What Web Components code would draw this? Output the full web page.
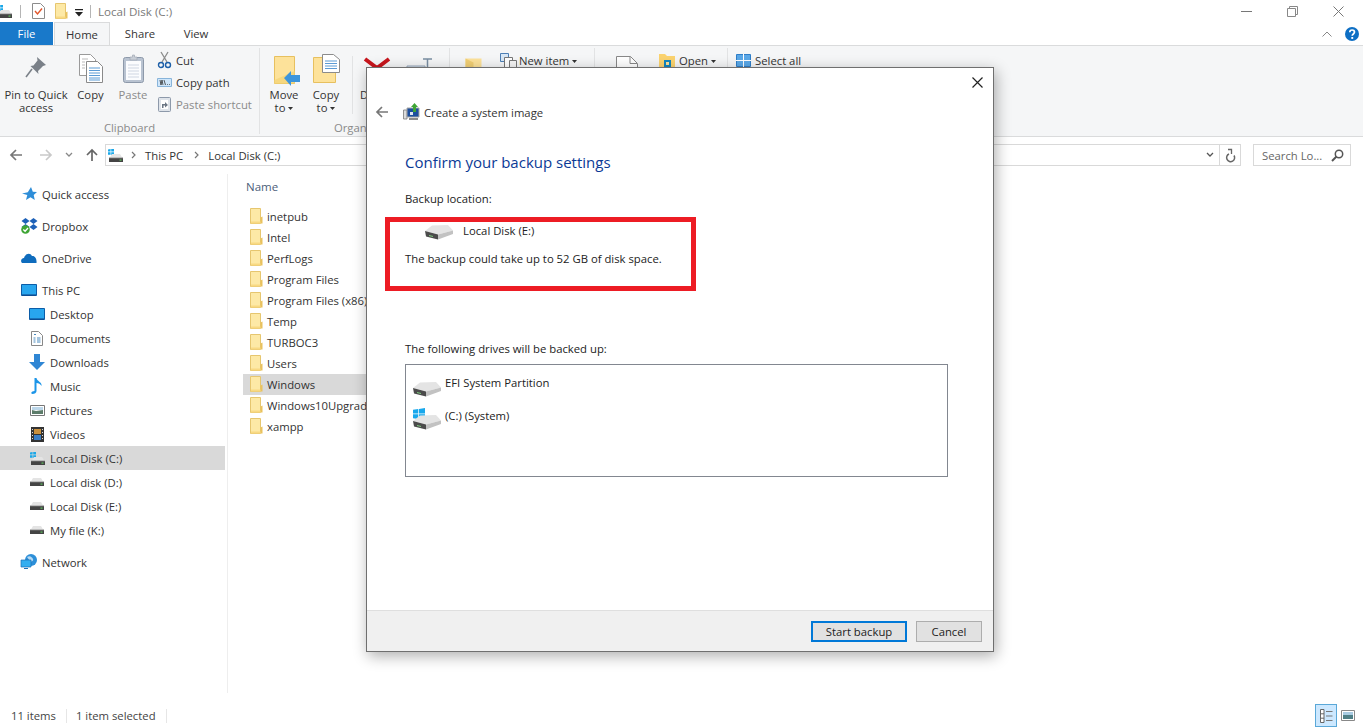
<!DOCTYPE html>
<html><head><meta charset="utf-8">
<style>
html,body{margin:0;padding:0;width:1363px;height:727px;overflow:hidden;background:#fff;font:11.3px "Open Sans","Liberation Sans",sans-serif;color:#222}
</style></head><body>
<win-explorer>
  <ex-title></ex-title>
  <ex-tabs></ex-tabs>
  <ex-ribbon></ex-ribbon>
  <ex-address></ex-address>
  <ex-main></ex-main>
  <ex-status></ex-status>
</win-explorer>
<backup-dialog></backup-dialog>
<script>
const FOLDER=`<path d="M1.500 .5h10v15h-10z" fill="#fde9a6" stroke="#e6c66f"/><path d="M11.500 9.500l2-1v7h-2z" fill="#e9c25e"/><path d="M2 13.500h9.500v2H2z" fill="#f8d983"/>`;
const DISK=`<path d="M1.500 2.500 3 0h8l1.500 2.500V4h-11z" fill="#e4e4e4"/><path d="M0 3h14v5H0z" fill="#444"/><path d="M0 3h14v1.200H0z" fill="#bdbdbd"/><path d="M10.500 5.500h2v1.200h-2z" fill="#5ec25e"/>`;
const WINL=`<path d="M0 .4 2.600 0v2.600H0zM3.200 0 6 0v2.600H3.200zM0 3.200h2.600V5.800H0zM3.200 3.200H6V6H3.200z" fill="#1aa7e8"/>`;
const BIG=`<path d="M1 7 8 1.500 24 1l5 5.500-15 4z" fill="#e4e4e4"/><path d="M1 7l13 3.500V15.500L2 12.500z" fill="#4b4b4b"/><path d="M14 10.500l15-4v3.500l-15 5.500z" fill="#c2c2c2"/><path d="M5 11l4 1v1l-4-1z" fill="#7ecb7e"/>`;
const ICONS={
 folder:[14,17,FOLDER],
 disk:[14,8,DISK],
 windisk:[15,13,WINL+`<g transform="translate(1 5)">${DISK}</g>`],
 bigdisk:[30,16,BIG],
 win:[12,12,`<path d="M0 1.700 5.300 1v4.600H0zM6 .9 12 0v5.600H6zM0 6.300h5.300V11L0 10.300zM6 6.300h6V12L6 11.100z" fill="#19a8ec"/>`],
 sysimg:[17,18,`<path d="M0.500 7h3.500v9H.5z" fill="#dcdcdc" stroke="#7a7a7a" stroke-width=".8"/><path d="M4 5h12v9H4z" fill="#1d4f9e" stroke="#a5a5a5"/><path d="M6 15h9v2H6z" fill="#8b8b8b"/><path d="M11.500 0l3.500 4h-2v5h-3V4h-2z" fill="#3fa535"/><path d="M7 9h3v3H7z" fill="#dfe6f2"/>`],
 back:[14,14,`<path d="M13 7H2.500M7 2 2 7l5 5" fill="none" stroke="currentColor" stroke-width="1.700"/>`],
 fwd:[14,14,`<path d="M1 7h10.500M7 2l5 5-5 5" fill="none" stroke="currentColor" stroke-width="1.700"/>`],
 up:[14,14,`<path d="M7 13V2M2 7l5-5 5 5" fill="none" stroke="currentColor" stroke-width="1.700"/>`],
 chev:[8,6,`<path d="M1 1l3 3 3-3" fill="none" stroke="currentColor" stroke-width="1.300"/>`],
 crumb:[6,8,`<path d="M1 1l3 3-3 3" fill="none" stroke="currentColor" stroke-width="1.200"/>`],
 drop:[5,3,`<path d="M0 0h5L2.500 3z" fill="currentColor"/>`],
 qat:[8,8,`<path d="M0 0h8v1.300H0zM0 3h8L4 7.500z" fill="#222"/>`],
 check:[13,16,`<path d="M.5.500h8l4 4v11H.5z" fill="#fff" stroke="#8c8c8c"/><path d="M3 8l2.500 3L10 5.500" fill="none" stroke="#e2562b" stroke-width="1.400"/>`],
 min:[11,1,`<path d="M0 0h11v1H0z" fill="#777"/>`],
 restore:[11,11,`<path d="M.5 2.500h8v8h-8zM2.500 2.500v-2h8v8h-2" fill="none" stroke="#888"/>`],
 close:[11,11,`<path d="M.5.500l10 10M10.500.500l-10 10" stroke="#777" fill="none"/>`],
 dclose:[11,11,`<path d="M.5.500l10 10M10.500.500l-10 10" stroke="#222" stroke-width="1.200" fill="none"/>`],
 caret:[10,6,`<path d="M.5 5.500 5 1l4.500 4.500" fill="none" stroke="#888"/>`],
 help:[14,14,`<circle cx="7" cy="7" r="7" fill="#0e6fc4"/><path d="M4.800 5.300c0-3 4.700-3 4.700-.2 0 1.900-2.300 1.900-2.300 3.700" fill="none" stroke="#fff" stroke-width="1.700"/><path d="M6.300 10h1.900v1.900H6.300z" fill="#fff"/>`],
 refresh:[11,13,`<path d="M9 5.500A4 4 0 1 1 4 4" fill="none" stroke="#666" stroke-width="1.500" transform="translate(0 1)"/><path d="M3 .500h3.500V5" fill="none" stroke="#666" stroke-width="1.300"/>`],
 search:[13,13,`<circle cx="8" cy="5" r="3.700" fill="none" stroke="#555" stroke-width="1.500"/><path d="M5.500 7.500 1 12" stroke="#555" stroke-width="2"/>`],
 pin:[22,22,`<path d="M12 1l9 8-3 1-5 5 .5 3-8-8 3-.5 4-5z" fill="#7a8088"/><path d="M7 13l-6 8" stroke="#7a8088" stroke-width="1.600"/>`],
 copy:[24,29,`<path d="M.5.500h11l5 5v16H.5z" fill="#fff" stroke="#9a9a9a"/><path d="M7.500 7.500h11l5 5v16h-16z" fill="#fff" stroke="#8a8a8a"/><path d="M10 14h11M10 16.500h11M10 19h11M10 21.500h11M10 24h11M10 26h11" stroke="#5b9bd5"/><path d="M3 5h6M3 8h3M3 11h3M3 14h3" stroke="#bbb"/>`],
 paste:[21,29,`<rect x=".5" y="3.500" width="20" height="25" rx="2" fill="#b9c3d1" stroke="#8d99aa"/><path d="M3 7h15v19H3z" fill="#fbfcfe"/><path d="M5 11h11M5 14h11M5 17h11M5 20h11M5 23h11" stroke="#cfd6e2"/><path d="M7 3h2.500V1h2v2H14v3H7z" fill="#c8ced6" stroke="#9aa3ae" stroke-width=".6"/>`],
 cut:[13,17,`<path d="M4 10 10 0M9 10 3 0" stroke="#8c8c8c" stroke-width="1.300"/><circle cx="3" cy="13" r="2.500" fill="none" stroke="#1d5fa8" stroke-width="1.400"/><circle cx="10" cy="13" r="2.500" fill="none" stroke="#1d5fa8" stroke-width="1.400"/>`],
 cpath:[15,9,`<path d="M.5.500h14v8H.5z" fill="#cfe6fa" stroke="#88b4da"/><path d="M3 2l1 5 1-5 1 5M7 2l1.500 5M10 6.500h.8M12 6.500h.8" stroke="#333" stroke-width=".8" fill="none"/>`],
 pshort:[13,16,`<rect x=".5" y="1.500" width="12" height="14" rx="1" fill="#dfe4ea" stroke="#8d99aa"/><path d="M3 4h7v9H3z" fill="#fff"/><path d="M4 12V8h3V6l3 3-3 2.500V9.500H5.500V12z" fill="#6c7785"/>`],
 moveto:[26,28,`<path d="M.5.500h20v27H.5z" fill="#fde29a" stroke="#e7c05f"/><path d="M20.500 15V27.500H.5V24z" fill="#f6d77f"/><path d="M10 22l7-7v4h9v7h-9v4z" fill="#3d95dc"/>`],
 copyto:[27,29,`<path d="M.5 3.500h22v25H.5z" fill="#fde29a" stroke="#e7c05f"/><path d="M9.500.500h11l6 5v13h-17z" fill="#fff" stroke="#8b8b8b"/><path d="M12 7h12M12 9.500h12M12 12h12M12 14.500h12" stroke="#5b9bd5"/>`],
 del:[26,17,`<path d="M1 1l12 9 12-9M8 16l5-6 5 6" fill="none" stroke="#c8161d" stroke-width="4"/>`],
 rename:[30,20,`<path d="M1 8h18v12H1z" fill="#dce5ee" stroke="#94a6ba"/><path d="M17 1h9M21.500 1v18M17 19h9" stroke="#7a8ea3" stroke-width="1.500" fill="none"/>`],
 newfolder:[17,22,`<path d="M.5.500h16v21H.5z" fill="#fde29a"/><path d="M.5.500l8 4v17h-8z" fill="#f2cf74"/>`],
 newitem:[17,15,`<path d="M.5.500h8v8h-8z" fill="#d8e8f7" stroke="#4d7fb5"/><path d="M4.500 4.500h8v10h-8z" fill="#fff" stroke="#777"/><path d="M9.500 7.500h7v7h-7z" fill="#f5f5f5" stroke="#777"/>`],
 prop:[22,22,`<path d="M.5.500h14l7 7v14H.5z" fill="#fff" stroke="#888"/><path d="M14 .5v7h7" fill="none" stroke="#888"/><path d="M13 16h4v4h-4z" fill="#d9662b"/>`],
 open:[16,15,`<path d="M0 1h6l2 2h8v12H0z" fill="#fbd36f"/><path d="M5 7h7v8H5z" fill="#1286bf"/><path d="M7 9h3v3H7z" fill="#fde29a"/>`],
 sel:[15,13,`<path d="M.5.500h14v12H.5z" fill="#5aa8e8" stroke="#2f7ec8"/><path d="M7.500 0v13M0 6.500h15" stroke="#fff"/>`],
 star:[15,15,`<path d="M9 0l1.800 4.700 4.200.3-3.300 3 1.100 5-4.300-2.800L4 13l1.300-5L0 6.500l5.800-1.200z" fill="#2f8ed8"/>`],
 dropbox:[17,16,`<path d="M4.500 0 8.500 3 4.500 6 .5 3zM12.500 0l4 3-4 3-4-3zM4.500 6l4 3-4 3-4-3zM12.500 6l4 3-4 3-4-3z" fill="#1d61b8"/><circle cx="4.500" cy="11.500" r="4.300" fill="#3fa535"/><path d="M2.300 11.500l1.800 1.800L7 10" stroke="#fff" stroke-width="1.300" fill="none"/>`],
 cloud:[16,10,`<path d="M1 10c-2-2-.5-5 2-5C4 1 9-1 11 3c3-.5 5 3 4.500 7z" fill="#0f6cbd"/>`],
 pc:[16,12,`<path d="M.5.500h15v11H.5z" fill="#28a6ee" stroke="#0c5da8"/><path d="M1 10.500h14v1H1z" fill="#0c3f80"/>`],
 doc:[12,15,`<path d="M.5.500h7l4 4v10H.5z" fill="#fff" stroke="#888"/><path d="M2.500 7h2M2.500 9h2M2.500 11h2M6 7h3.500M6 9h3.500M6 11h3.500M3 3.500h2" stroke="#4a8bbf"/>`],
 dl:[16,16,`<path d="M5 0h6v8h5l-8 8-8-8h5z" fill="#2f86d4"/>`],
 music:[12,16,`<path d="M3.500 0h2c0 3 6 4 5 8-1-2-3-3-5-3v8c0 2-2 3-4 3-2 0-1.500-3 2-3z" fill="#1c95e8"/>`],
 pic:[15,11,`<path d="M.5.500h14v10H.5z" fill="#fff" stroke="#777"/><path d="M2 2h11v3H2z" fill="#bcd7ea"/><path d="M2 5l4 1 7-1v4H2z" fill="#5c7c6a"/>`],
 video:[13,15,`<path d="M0 0h13v15H0z" fill="#333"/><path d="M3 2h7v5H3z" fill="#c98f3b"/><path d="M3 8h7v5H3z" fill="#3a7dc4"/><path d="M1 2h1v1H1zM1 5h1v1H1zM1 8h1v1H1zM1 11h1v1H1zM11 2h1v1h-1zM11 5h1v1h-1zM11 8h1v1h-1zM11 11h1v1h-1z" fill="#ddd"/>`],
 net:[16,16,`<circle cx="10" cy="6" r="6" fill="#2d8fd8"/><path d="M6 3c3-2 5 0 6 2s-2 3-3 2z" fill="#b5d9f3"/><path d="M0 6h10v7H0z" fill="#33aef0" stroke="#1a6fb5" stroke-width=".7"/><path d="M3 14h4v1H3z" fill="#1a6fb5"/>`],
 details:[14,14,`<path d="M1.500 .5h3.500v13H1.500z" fill="#fff" stroke="#666"/><path d="M1.500 4.800h3.500M1.500 9.200h3.500" stroke="#666"/><path d="M7 2.500h6.500M7 7h6.500M7 11.500h6.500" stroke="#777" stroke-width="1.200"/>`],
 thumbs:[14,11,`<path d="M.5.500h13v10H.5z" fill="#fff" stroke="#888"/><path d="M2 2h10v3H2z" fill="#a8cbe2"/><path d="M2 5h10v4H2z" fill="#4f7f86"/>`]
};
class XIcon extends HTMLElement{
  connectedCallback(){
    if(this.shadowRoot)return;
    const [w,h,p]=ICONS[this.getAttribute('name')];
    this.attachShadow({mode:'open'}).innerHTML=`<style>:host{display:inline-flex;flex:none;width:${w}px;height:${h}px}svg{display:block;overflow:visible}</style><svg width="${w}" height="${h}" viewBox="0 0 ${w} ${h}">${p}</svg>`;
  }
}
customElements.define('x-icon',XIcon);
function def(tag,html){
  customElements.define(tag,class extends HTMLElement{
    connectedCallback(){
      if(this.shadowRoot)return;
      const s=this.attachShadow({mode:'open'});
      s.innerHTML=html;
    }
  });
}
def('win-explorer',`<style>:host{display:flex;flex-direction:column;width:1363px;height:727px;overflow:hidden}</style><slot></slot>`);
def('ex-title',`<style>
:host{display:flex;align-items:center;height:22px;flex:none;color:#7a7a7a;font-size:11.6px}
.l{display:flex;align-items:center;margin-left:-3px}
.sep{width:1px;height:13px;background:#b5b5b5}
.title{margin-left:7px}
.w{margin-left:auto;display:flex;align-items:center;padding-right:19px;gap:35px}
</style><div class="l"><x-icon name="windisk"></x-icon><span class="sep" style="margin-left:8px"></span><x-icon name="check" style="margin-left:11px"></x-icon><x-icon name="folder" style="margin-left:9px"></x-icon><x-icon name="qat" style="margin-left:7px;margin-top:3px"></x-icon><span class="sep" style="margin-left:7px"></span></div><span class="title">Local Disk (C:)</span>
<div class="w"><x-icon name="min"></x-icon><x-icon name="restore"></x-icon><x-icon name="close"></x-icon></div>`);
def('ex-tabs',`<style>
:host{display:flex;height:23px;flex:none;align-items:stretch;color:#333}
.t{display:flex;align-items:center;justify-content:center}
.f{width:53px;background:#1979ca;color:#fff}
.h{width:56px;background:#f5f6f7;border:1px solid #dadbdc;border-bottom:0;margin-left:1px;box-sizing:border-box}
.s{width:60px}.v{width:52px}
.r{margin-left:auto;display:flex;align-items:center;gap:13px;padding-right:4px}
</style><div class="t f">File</div><div class="t h">Home</div><div class="t s">Share</div><div class="t v">View</div>
<div class="r"><x-icon name="caret"></x-icon><x-icon name="help"></x-icon></div>`);
def('ex-ribbon',`<style>
:host{display:flex;height:92px;flex:none;box-sizing:border-box;background:#f5f6f7;border-top:1px solid #dadbdc;border-bottom:1px solid #dadbdc;color:#333;line-height:13px}
.g{display:flex;flex-direction:column;border-right:1px solid #e2e3e4;margin:2px 0 2px;box-sizing:border-box;flex:none}
.c{display:flex;height:73px;flex:none}
.lab{height:14px;text-align:center;color:#8a8a8a;line-height:14px}
.b{display:flex;flex-direction:column;align-items:center;text-align:center;flex:none}
.ic{height:40px;display:flex;align-items:flex-start;justify-content:center;padding-top:6px;box-sizing:border-box}
.dis{color:#8b8b8b}
.col{display:flex;flex-direction:column;padding-top:1px}
.row{display:flex;align-items:center;gap:4px;height:22px;white-space:nowrap}
.sm{width:15px;display:flex;justify-content:center;flex:none}
.v{width:1px;background:#e2e3e4;margin:8px 0 7px 8px}
</style>
<div class="g" style="width:260px"><div class="c">
 <div class="b" style="width:72px"><div class="ic" style="padding-top:8px"><x-icon name="pin"></x-icon></div><span>Pin to Quick<br>access</span></div>
 <div class="b" style="width:37px"><div class="ic"><x-icon name="copy"></x-icon></div><span>Copy</span></div>
 <div class="b dis" style="width:48px"><div class="ic"><x-icon name="paste"></x-icon></div><span>Paste</span></div>
 <div class="col"><div class="row"><span class="sm"><x-icon name="cut"></x-icon></span>Cut</div><div class="row"><span class="sm"><x-icon name="cpath"></x-icon></span>Copy path</div><div class="row dis"><span class="sm"><x-icon name="pshort"></x-icon></span>Paste shortcut</div></div>
 </div><div class="lab">Clipboard</div></div>
<div class="g" style="width:190px"><div class="c">
 <div class="b" style="width:48px"><div class="ic" style="padding-top:8px"><x-icon name="moveto" style="margin-left:6px"></x-icon></div><span>Move<br>to <x-icon name="drop" style="vertical-align:2px"></x-icon></span></div>
 <div class="b" style="width:36px"><div class="ic"><x-icon name="copyto"></x-icon></div><span>Copy<br>to <x-icon name="drop" style="vertical-align:2px"></x-icon></span></div>
 <div class="v"></div>
 <div class="b" style="width:48px"><div class="ic" style="padding-top:10px"><x-icon name="del"></x-icon></div><span>Delete</span></div>
 <div class="b" style="width:40px"><div class="ic" style="padding-top:10px"><x-icon name="rename"></x-icon></div><span>Rename</span></div>
 </div><div class="lab" style="padding-left:6px">Organize</div></div>
<div class="g" style="width:145px"><div class="c">
 <div class="b" style="width:46px"><div class="ic" style="padding-top:10px"><x-icon name="newfolder"></x-icon></div></div>
 <div class="col" style="margin-left:4px"><div class="row" style="gap:2px"><x-icon name="newitem"></x-icon><span>New item <x-icon name="drop" style="vertical-align:2px"></x-icon></span></div></div>
 </div></div>
<div class="g" style="width:133px"><div class="c">
 <div class="b" style="width:64px"><div class="ic" style="padding-top:8px"><x-icon name="prop"></x-icon></div></div>
 <div class="col"><div class="row"><x-icon name="open"></x-icon><span>Open <x-icon name="drop" style="vertical-align:2px"></x-icon></span></div></div>
 </div></div>
<div class="g" style="border:0"><div class="c"><div class="col" style="padding-left:8px"><div class="row"><x-icon name="sel"></x-icon>Select all</div></div></div></div>`);
def('ex-address',`<style>
:host{display:flex;align-items:center;height:37px;flex:none;box-sizing:border-box;padding:0 12px 1px 9px;color:#333}
.n{display:flex;align-items:center;width:96px;flex:none}
.box{display:flex;align-items:center;height:22px;box-sizing:border-box;border:1px solid #d9d9d9}
.a{flex:none;width:1136px}
.i{margin-left:auto;display:flex;align-items:center}
.d{width:20px;height:20px;border-left:1px solid #d9d9d9;display:flex;align-items:center;justify-content:center}
.s{width:99px;margin-left:12px;padding-left:8px;color:#666;justify-content:space-between;padding-right:6px}
</style><div class="n"><x-icon name="back" style="color:#777"></x-icon><x-icon name="fwd" style="color:#c9c9c9;margin-left:16px"></x-icon><x-icon name="chev" style="color:#888;margin-left:12px"></x-icon><x-icon name="up" style="color:#666;margin-left:12px"></x-icon></div>
<div class="box a"><x-icon name="windisk" style="margin-left:2px"></x-icon><x-icon name="crumb" style="color:#777;margin-left:8px"></x-icon><span style="margin-left:8px">This PC</span><x-icon name="crumb" style="color:#777;margin-left:11px"></x-icon><span style="margin-left:8px">Local Disk (C:)</span><div class="i"><x-icon name="chev" style="color:#555;margin-right:5px"></x-icon><div class="d"><x-icon name="refresh"></x-icon></div></div></div>
<div class="box s"><span>Search Lo...</span><x-icon name="search"></x-icon></div>`);
def('ex-main',`<style>:host{display:flex;flex:1;min-height:0}</style><ex-nav></ex-nav><ex-files></ex-files>`);
const nav=(ic,t,cls='')=>`<div class="r ${cls}"><span class="i"><x-icon name="${ic}"></x-icon></span><span>${t}</span></div>`;
def('ex-nav',`<style>
:host{display:block;width:227px;flex:none;box-sizing:border-box;padding-top:8px;color:#333}
.r{display:flex;align-items:center;height:24px;width:225px;padding-left:20px;box-sizing:border-box}
.i{width:18px;display:flex;justify-content:center;flex:none;margin-right:4px}
.c .r{padding-left:28px}
.g{margin-bottom:8px}
.sel{background:#d9d9d9}
</style>
<div class="g">${nav('star','Quick access')}</div><div class="g">${nav('dropbox','Dropbox')}</div><div class="g">${nav('cloud','OneDrive')}</div>
<div class="g">${nav('pc','This PC')}<div class="c">${nav('pc','Desktop')}${nav('doc','Documents')}${nav('dl','Downloads')}${nav('music','Music')}${nav('pic','Pictures')}${nav('video','Videos')}${nav('windisk','Local Disk (C:)','sel')}${nav('disk','Local disk (D:)')}${nav('disk','Local Disk (E:)')}${nav('disk','My file (K:)')}</div></div>
<div class="g">${nav('net','Network')}</div>`);
const files=['inetpub','Intel','PerfLogs','Program Files','Program Files (x86)','Temp','TURBOC3','Users','Windows','Windows10Upgrade','xampp'];
def('ex-files',`<style>
:host{display:block;flex:1;border-left:1px solid #eeeeee;margin-bottom:11px;padding-left:15px;color:#333;white-space:nowrap;overflow:hidden}
.h{height:24px;line-height:24px;margin-left:3px;padding-top:1px;color:#4c607a;margin-bottom:7px;font-size:11.5px}
.r{display:flex;align-items:center;height:21px;padding-left:6px;width:400px;gap:4px}
.sel{background:#d9d9d9}
</style><div class="h">Name</div>${files.map(f=>`<div class="r ${f==='Windows'?'sel':''}"><x-icon name="folder"></x-icon><span>${f}</span></div>`).join('')}`);
def('ex-status',`<style>
:host{display:flex;align-items:center;height:23px;flex:none;color:#444}
.t{padding:0 10px 0 11px}
.s{width:1px;height:14px;background:#e6e6e6}
.v{margin-left:auto;display:flex;align-items:center;gap:4px;padding-right:8px}
.b{width:22px;height:23px;box-sizing:border-box;background:#cce8ff;border:1px solid #5aa8d8;display:flex;align-items:center;justify-content:center}
</style><span class="t">11 items</span><span class="s"></span><span class="t" style="padding-left:9px">1 item selected</span><span class="s"></span>
<div class="v"><div class="b"><x-icon name="details"></x-icon></div><x-icon name="thumbs"></x-icon></div>`);
def('backup-dialog',`<style>
:host{position:absolute;left:366px;top:67px;width:628px;height:585px;box-sizing:border-box;background:#fff;border:1px solid #6f6f6f;box-shadow:2px 4px 14px rgba(0,0,0,.32);display:flex;flex-direction:column;color:#222}
.top{display:flex;justify-content:flex-end;padding:9px 10px 0 0;height:25px;box-sizing:border-box;flex:none}
.head{display:flex;align-items:center;height:38px;flex:none;padding-left:8px;color:#333}
.head .t{margin-left:4px}
.body{flex:1;padding:0 0 0 38px}
h1{font:400 15px/18px "Open Sans","Liberation Sans",sans-serif;color:#0b3a96;margin:22px 0 0}
p{margin:0;line-height:15px}
.loc{margin-top:20px}
.d{display:flex;margin-top:18px;padding-left:19px;height:19px}
.d span{margin-left:9px;margin-top:-1px;line-height:15px}
.l2{margin-top:8px}
.f{margin-top:75px}
.list{width:543px;height:113px;box-sizing:border-box;border:1px solid #828790;margin-top:8px;padding-top:12px}
.li{display:flex;height:33px;padding-left:6px}
.li .t{margin-left:3px;margin-top:-2px;line-height:15px}
.red{position:absolute;left:18px;top:149px;width:311px;height:74px;box-sizing:border-box;border:5px solid #ed1c24}
.foot{flex:none;height:41px;background:#f0f0f0;border-top:1px solid #dfdfdf;box-sizing:border-box;display:flex;justify-content:flex-end;align-items:center;padding-right:11px;gap:9px}
.btn{height:21px;box-sizing:border-box;display:flex;align-items:center;justify-content:center;background:#e1e1e1;border:1px solid #adadad;color:#222}
.pri{width:96px;border:2px solid #0078d7}
.can{width:66px}
</style>
<div class="top"><x-icon name="dclose"></x-icon></div>
<div class="head"><x-icon name="back" style="color:#777"></x-icon><x-icon name="sysimg" style="margin-left:14px"></x-icon><span class="t">Create a system image</span></div>
<div class="body">
<h1>Confirm your backup settings</h1>
<p class="loc">Backup location:</p>
<div class="d"><x-icon name="bigdisk"></x-icon><span>Local Disk (E:)</span></div>
<p class="l2">The backup could take up to 52 GB of disk space.</p>
<p class="f">The following drives will be backed up:</p>
<div class="list">
 <div class="li"><x-icon name="bigdisk" style="margin-top:4px"></x-icon><span class="t">EFI System Partition</span></div>
 <div class="li"><span style="display:grid;width:30px;height:24px"><x-icon name="win" style="grid-area:1/1;margin-left:1px;margin-top:-2px"></x-icon><x-icon name="bigdisk" style="grid-area:1/1;margin-top:4px"></x-icon></span><span class="t">(C:) (System)</span></div>
</div>
</div>
<div class="foot"><div class="btn pri">Start backup</div><div class="btn can">Cancel</div></div>
<div class="red"></div>`);
</script>
</body></html>
